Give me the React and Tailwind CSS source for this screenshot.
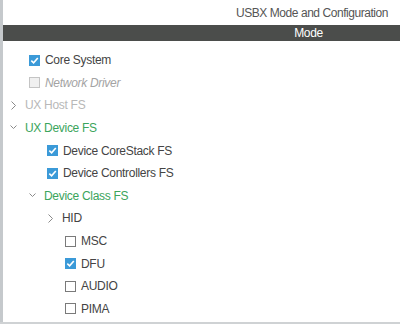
import React from "react";

const font = { fontFamily: '"Liberation Sans", Arial, sans-serif' };

function Check({ checked, disabled }) {
  if (checked) {
    return (
      <span className="w-[11px] h-[11px] bg-[#3b9ad8] flex items-center justify-center shrink-0">
        <svg width="9" height="9" viewBox="0 0 9 9">
          <path d="M1.3 4.6 L3.6 6.8 L7.8 1.9" stroke="white" strokeWidth="1.6" fill="none" />
        </svg>
      </span>
    );
  }
  return (
    <span
      className={
        "w-[11px] h-[11px] shrink-0 border " +
        (disabled ? "border-[#c4c4c4] bg-[#f0f0f0]" : "border-[#7a7a7a] bg-white")
      }
    />
  );
}

function Chevron({ open }) {
  return (
    <svg width="7" height="9" viewBox="0 0 7 9" className="shrink-0">
      {open ? (
        <path d="M0.5 2.5 L3.5 5.5 L6.5 2.5" stroke="#8a8a8a" strokeWidth="1" fill="none" />
      ) : (
        <path d="M1.5 0.5 L5.5 4.5 L1.5 8.5" stroke="#8a8a8a" strokeWidth="1" fill="none" />
      )}
    </svg>
  );
}

function Row({ depth, kind, checked, disabled, open, label, cls }) {
  const pl = { 0: "pl-[7px]", 1: "pl-[26px]", 2: "pl-[44px]", 3: "pl-[62px]" }[depth];
  return (
    <div className={"h-[22.64px] flex items-center " + pl}>
      {kind === "check" ? (
        <div className="flex items-center gap-[5px]">
          <Check checked={checked} disabled={disabled} />
          <span className={cls}>{label}</span>
        </div>
      ) : (
        <div className="flex items-center gap-[8px]">
          <Chevron open={open} />
          <span className={cls}>{label}</span>
        </div>
      )}
    </div>
  );
}

export default function App() {
  const dark = "text-[#444444]";
  const green = "text-[#3ba55c]";
  return (
    <div className="w-[400px] h-[324px] bg-white flex flex-col overflow-hidden" style={font}>
      <div className="flex flex-1 border-l-[3px] border-[#c5c9cc] flex-col">
        <div className="h-[25px] flex items-center justify-end pr-[12px] text-[12px] tracking-[-0.45px] text-[#555555]">
          USBX Mode and Configuration
        </div>
        <div className="h-[16px] bg-[#4b4d4b] flex items-center justify-end pr-[77px] text-[12px] tracking-[-0.3px] text-white">
          Mode
        </div>
        <div className="pt-[7.7px] text-[12px] tracking-[-0.3px]">
          <Row depth={1} kind="check" checked label="Core System" cls={dark} />
          <Row depth={1} kind="check" disabled label="Network Driver" cls="text-[#a3a3a3] italic" />
          <Row depth={0} kind="chev" label="UX Host FS" cls="text-[#b8b8b8]" />
          <Row depth={0} kind="chev" open label="UX Device FS" cls={green} />
          <Row depth={2} kind="check" checked label="Device CoreStack FS" cls={dark} />
          <Row depth={2} kind="check" checked label="Device Controllers FS" cls={dark} />
          <Row depth={1} kind="chev" open label="Device Class FS" cls={green} />
          <Row depth={2} kind="chev" label="HID" cls={dark} />
          <Row depth={3} kind="check" label="MSC" cls={dark} />
          <Row depth={3} kind="check" checked label="DFU" cls={dark} />
          <Row depth={3} kind="check" label="AUDIO" cls={dark} />
          <Row depth={3} kind="check" label="PIMA" cls={dark} />
        </div>
        <div className="flex-1" />
      </div>
      <div className="h-[2px] bg-[#cfd2d4]" />
    </div>
  );
}
